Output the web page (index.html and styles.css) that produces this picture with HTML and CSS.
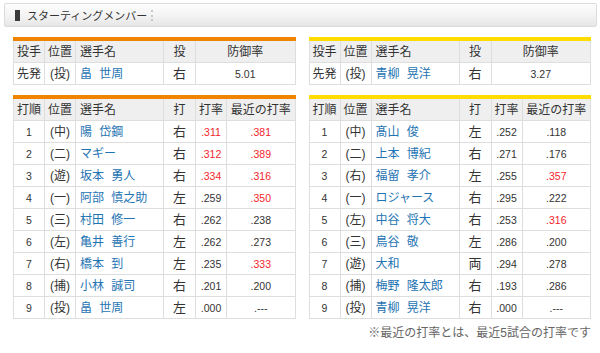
FILE: index.html
```html
<!DOCTYPE html>
<html lang="ja">
<head>
<meta charset="utf-8">
<title>スターティングメンバー</title>
<link rel="stylesheet" href="styles.css">
</head>
<body>
<div class="title"><span class="mark"></span><span class="title-text">スターティングメンバー</span><span class="dots"></span></div>
<div class="cols">
  <div class="col">
    <table class="tbl orange pitch">
      <colgroup><col class="w-a"><col class="w-a"><col class="w-name"><col class="w-hand"><col></colgroup>
      <tr><th>投手</th><th>位置</th><th class="l">選手名</th><th>投</th><th>防御率</th></tr>
      <tr><td>先発</td><td>(投)</td><td class="name">畠 世周</td><td class="hand">右</td><td class="num">5.01</td></tr>
    </table>
    <table class="tbl orange bat">
      <colgroup><col class="w-a"><col class="w-a"><col class="w-name"><col class="w-hand"><col class="w-avg"><col></colgroup>
      <tr><th>打順</th><th>位置</th><th class="l">選手名</th><th>打</th><th>打率</th><th>最近の打率</th></tr>
      <tr><td class="num">1</td><td>(中)</td><td class="name">陽 岱鋼</td><td class="hand">右</td><td class="num red">.311</td><td class="num red">.381</td></tr>
      <tr><td class="num">2</td><td>(二)</td><td class="name">マギー</td><td class="hand">右</td><td class="num red">.312</td><td class="num red">.389</td></tr>
      <tr><td class="num">3</td><td>(遊)</td><td class="name">坂本 勇人</td><td class="hand">右</td><td class="num red">.334</td><td class="num red">.316</td></tr>
      <tr><td class="num">4</td><td>(一)</td><td class="name">阿部 慎之助</td><td class="hand">左</td><td class="num">.259</td><td class="num red">.350</td></tr>
      <tr><td class="num">5</td><td>(三)</td><td class="name">村田 修一</td><td class="hand">右</td><td class="num">.262</td><td class="num">.238</td></tr>
      <tr><td class="num">6</td><td>(左)</td><td class="name">亀井 善行</td><td class="hand">左</td><td class="num">.262</td><td class="num">.273</td></tr>
      <tr><td class="num">7</td><td>(右)</td><td class="name">橋本 到</td><td class="hand">左</td><td class="num">.235</td><td class="num red">.333</td></tr>
      <tr><td class="num">8</td><td>(捕)</td><td class="name">小林 誠司</td><td class="hand">右</td><td class="num">.201</td><td class="num">.200</td></tr>
      <tr><td class="num">9</td><td>(投)</td><td class="name">畠 世周</td><td class="hand">左</td><td class="num">.000</td><td class="num">.---</td></tr>
    </table>
  </div>
  <div class="col">
    <table class="tbl yellow pitch">
      <colgroup><col class="w-a"><col class="w-a"><col class="w-name"><col class="w-hand"><col></colgroup>
      <tr><th>投手</th><th>位置</th><th class="l">選手名</th><th>投</th><th>防御率</th></tr>
      <tr><td>先発</td><td>(投)</td><td class="name">青柳 晃洋</td><td class="hand">右</td><td class="num">3.27</td></tr>
    </table>
    <table class="tbl yellow bat">
      <colgroup><col class="w-a"><col class="w-a"><col class="w-name"><col class="w-hand"><col class="w-avg"><col></colgroup>
      <tr><th>打順</th><th>位置</th><th class="l">選手名</th><th>打</th><th>打率</th><th>最近の打率</th></tr>
      <tr><td class="num">1</td><td>(中)</td><td class="name">髙山 俊</td><td class="hand">左</td><td class="num">.252</td><td class="num">.118</td></tr>
      <tr><td class="num">2</td><td>(二)</td><td class="name">上本 博紀</td><td class="hand">右</td><td class="num">.271</td><td class="num">.176</td></tr>
      <tr><td class="num">3</td><td>(右)</td><td class="name">福留 孝介</td><td class="hand">左</td><td class="num">.255</td><td class="num red">.357</td></tr>
      <tr><td class="num">4</td><td>(一)</td><td class="name">ロジャース</td><td class="hand">右</td><td class="num">.295</td><td class="num">.222</td></tr>
      <tr><td class="num">5</td><td>(左)</td><td class="name">中谷 将大</td><td class="hand">右</td><td class="num">.253</td><td class="num red">.316</td></tr>
      <tr><td class="num">6</td><td>(三)</td><td class="name">鳥谷 敬</td><td class="hand">左</td><td class="num">.286</td><td class="num">.200</td></tr>
      <tr><td class="num">7</td><td>(遊)</td><td class="name">大和</td><td class="hand">両</td><td class="num">.294</td><td class="num">.278</td></tr>
      <tr><td class="num">8</td><td>(捕)</td><td class="name">梅野 隆太郎</td><td class="hand">右</td><td class="num">.193</td><td class="num">.286</td></tr>
      <tr><td class="num">9</td><td>(投)</td><td class="name">青柳 晃洋</td><td class="hand">右</td><td class="num">.000</td><td class="num">.---</td></tr>
    </table>
    <p class="note">※最近の打率とは、最近5試合の打率です</p>
  </div>
</div>
</body>
</html>
```
FILE: styles.css
```css
html, body {
  margin: 0;
  padding: 0;
  background: #fff;
}
body {
  font-family: "Liberation Sans", "Noto Sans CJK JP", sans-serif;
  color: #333;
  font-size: 12px;
}
.title {
  margin: 3px 3px 0 4px;
  height: 22px;
  border: 1px solid #dcdcdc;
  border-radius: 2px;
  background: linear-gradient(#fdfdfd, #f3f3f3 55%, #e6e6e6);
  display: flex;
  align-items: center;
  padding-left: 10px;
}
.mark {
  width: 5px;
  height: 11px;
  background: #3a3a3a;
  margin-right: 7px;
}
.title-text {
  font-family: "Noto Sans CJK JP", sans-serif;
  font-size: 11px;
  color: #333;
}
.dots {
  width: 0;
  height: 11px;
  border-left: 2px dotted #c8c8c8;
  margin-left: 4px;
}
.cols {
  display: flex;
  gap: 13px;
  padding: 10px 9px 0 13px;
}
.col {
  flex: 1;
  min-width: 0;
}
.tbl {
  width: 100%;
  table-layout: fixed;
  border-collapse: collapse;
  margin-bottom: 10px;
}
.tbl.orange { border-top: 4px solid #f08300; }
.tbl.yellow { border-top: 4px solid #ffdc00; }
.w-a { width: 31px; }
.w-name { width: 88px; }
.w-hand { width: 32px; }
.w-avg { width: 31px; }
.tbl th, .tbl td {
  border: 1px solid #dedede;
  height: 21px;
  padding: 0;
  text-align: center;
  white-space: nowrap;
  overflow: hidden;
  font-weight: normal;
  line-height: 14px;
}
.tbl th {
  background: #efefef;
  font-size: 12px;
}
.tbl th.l, .tbl td.name {
  text-align: left;
  padding-left: 4px;
}
.tbl td.name {
  color: #1f74b3;
  word-spacing: 4px;
}
.tbl td.hand {
  font-size: 13px;
}
.tbl td.num {
  font-size: 10.5px;
}
.tbl td.red {
  color: #f3262b;
}
.note {
  margin: -6px 0 0;
  text-align: right;
  font-size: 12px;
  color: #666;
}
```
